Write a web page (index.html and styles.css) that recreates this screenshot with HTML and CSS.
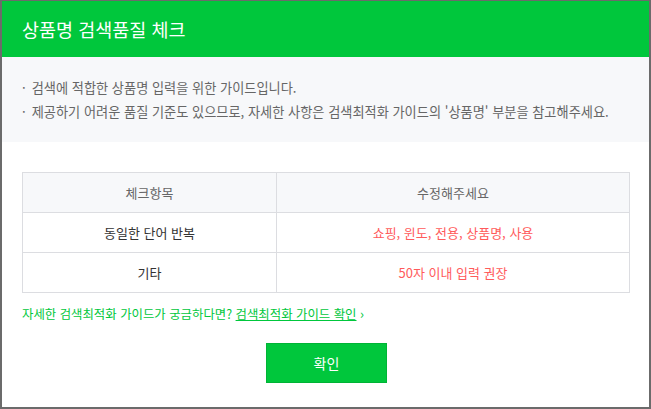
FILE: index.html
```html
<!DOCTYPE html>
<html lang="ko">
    <head>
        <meta charset="utf-8">
        <link rel="stylesheet" href="styles.css">
    </head>
    <body>
        <div class="modal">
            <div class="modal-head">
                <h2>상품명 검색품질 체크</h2>
            </div>
            <div class="guide">
                <p>검색에 적합한 상품명 입력을 위한 가이드입니다.</p>
                <p>제공하기 어려운 품질 기준도 있으므로, 자세한 사항은 검색최적화 가이드의 '상품명' 부분을 참고해주세요.</p>
            </div>
            <div class="modal-body">
                <table class="check">
                    <tr>
                        <th class="col-item">체크항목</th>
                        <th>수정해주세요</th>
                    </tr>
                    <tr>
                        <td>동일한 단어 반복</td>
                        <td class="warn">쇼핑, 윈도, 전용, 상품명, 사용</td>
                    </tr>
                    <tr>
                        <td>기타</td>
                        <td class="warn">50자 이내 입력 권장</td>
                    </tr>
                </table>
                <p class="more">자세한 검색최적화 가이드가 궁금하다면? <a href="#">검색최적화 가이드 확인</a> <span class="arrow">&rsaquo;</span></p>
                <div class="btns">
                    <button class="ok">확인</button>
                </div>
            </div>
        </div>
    </body>
</html>
```

FILE: styles.css
```css
body {
    margin: 0;
    background-color: #6b6b6b;
    font-family: "Noto Sans CJK KR", "Noto Sans", sans-serif;
}
.modal {
    margin: 1px 2px 0 2px;
    height: 406px;
    background-color: white;
    display: flex;
    flex-direction: column;
}
.modal-head {
    background-color: #00c73c;
    height: 56px;
    padding: 0 20px;
    display: flex;
    align-items: center;
}
.modal-head h2 {
    margin: 0;
    color: white;
    font-size: 18.5px;
    font-weight: normal;
}
.guide {
    background-color: #f7f8fa;
    height: 85px;
    padding: 0 20px;
    display: flex;
    flex-direction: column;
    justify-content: center;
    gap: 6px;
}
.guide p {
    margin: 0;
    font-size: 13.2px;
    color: #666;
    line-height: 18px;
}
.guide p::before {
    content: "·";
    margin-right: 6px;
}
.modal-body {
    padding: 30px 19px 0 20px;
}
table.check {
    width: 100%;
    border-collapse: collapse;
    font-size: 13px;
}
.check th, .check td {
    border: 1px solid #dcdde1;
    height: 39px;
    padding: 0;
    text-align: center;
    font-weight: normal;
}
.check th {
    background-color: #f7f8fa;
    color: #666;
}
.check td {
    color: #333;
}
.check .col-item {
    width: 253px;
}
.check td.warn {
    color: #ff5b5b;
}
.more {
    margin: 11px 0 0 0;
    font-size: 12.4px;
    color: #00c73c;
}
.more a {
    color: #00c73c;
    text-decoration: underline;
}
.more .arrow {
    font-size: 13px;
}
.btns {
    display: flex;
    justify-content: center;
    margin-top: 20px;
}
.ok {
    width: 121px;
    height: 40px;
    background-color: #00c73c;
    border: 1px solid #00b436;
    color: white;
    font-family: inherit;
    font-size: 14px;
    margin-left: 1px;
}
```
